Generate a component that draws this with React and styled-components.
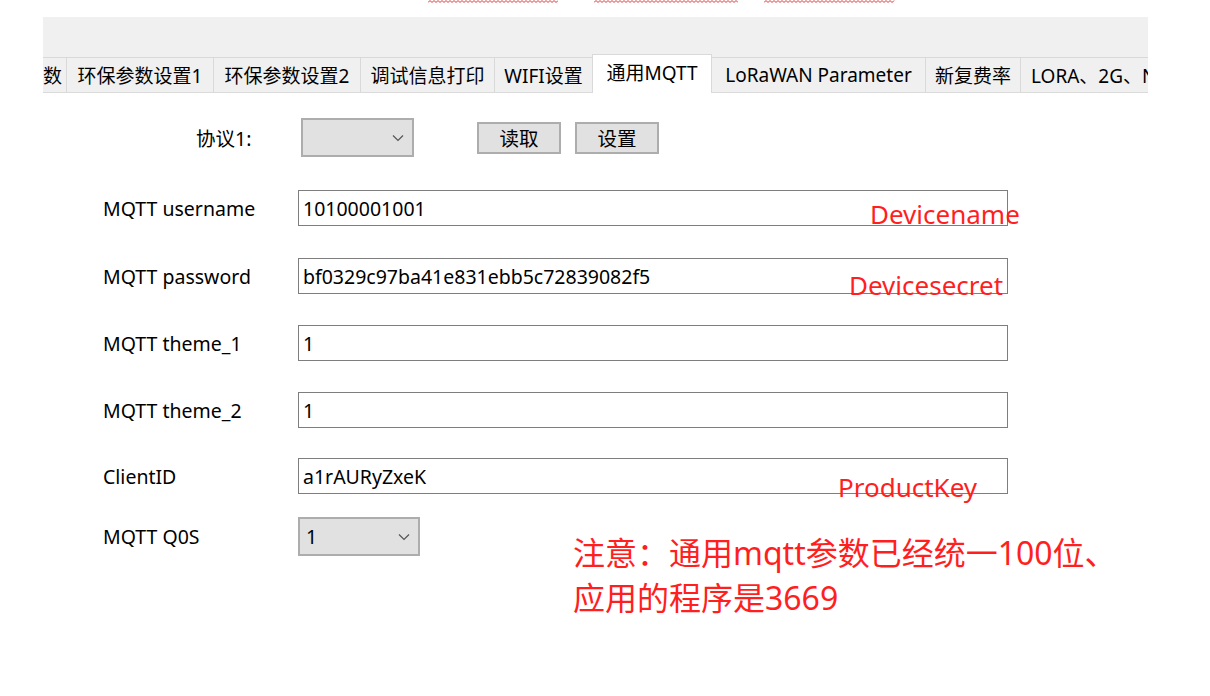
import React from "react";
import styled, { createGlobalStyle } from "styled-components";

const GlobalStyle = createGlobalStyle`
  html, body {
    margin: 0;
    padding: 0;
    background: #fff;
  }
  body {
    font-family: "Noto Sans", "Noto Sans CJK SC", sans-serif;
    color: #000;
  }
`;

const Page = styled.div`
  position: relative;
  width: 1210px;
  height: 696px;
  overflow: hidden;
  background: #fff;
`;

const SquiggleRow = styled.div`
  display: flex;
  height: 3px;
  padding-left: 428px;
`;

const Squiggle = styled.svg`
  display: block;
  margin-right: ${(p) => p.$gap || 0}px;
`;

const Panel = styled.div`
  margin: 14px 0 0 43px;
  width: 1105px;
  height: 76px;
  background: #f0f0f0;
  display: flex;
  flex-direction: column;
  justify-content: flex-end;
  overflow: hidden;
`;

const TabStrip = styled.div`
  display: flex;
  align-items: flex-end;
  height: 39px;
  box-shadow: inset 0 -1px 0 #dadada;
`;

const Tab = styled.div`
  flex: none;
  box-sizing: border-box;
  width: ${(p) => p.$w}px;
  height: ${(p) => (p.$active ? 39 : 36)}px;
  margin-left: -1px;
  padding: ${(p) => (p.$active ? "0 0 4px" : "0 0 1px")};
  padding-left: ${(p) => p.$pl || 0}px;
  display: flex;
  align-items: center;
  justify-content: ${(p) => (p.$pl !== undefined ? "flex-start" : "center")};
  background: ${(p) => (p.$active ? "#fff" : "#f0f0f0")};
  border: 1px solid #d9d9d9;
  border-bottom: ${(p) => (p.$active ? "none" : "1px solid #dadada")};
  font-size: 19px;
  white-space: nowrap;
  overflow: hidden;
  &:first-child {
    margin-left: 0;
    border-left: none;
  }
`;

const Form = styled.div`
  position: relative;
  padding-left: 103px;
`;

const Row = styled.div`
  display: flex;
  align-items: center;
  height: ${(p) => p.$h || 36}px;
  margin-top: ${(p) => p.$mt}px;
  padding-left: ${(p) => p.$indent || 0}px;
`;

const Label = styled.div`
  flex: none;
  width: ${(p) => p.$w || 195}px;
  font-size: 19.5px;
  white-space: nowrap;
`;

const TextBox = styled.div`
  box-sizing: border-box;
  width: 710px;
  height: 36px;
  border: 1px solid #7e7e7e;
  background: #fff;
  padding-left: 4px;
  display: flex;
  align-items: center;
  font-size: 19.5px;
`;

const Combo = styled.div`
  box-sizing: border-box;
  width: ${(p) => p.$w}px;
  height: 39px;
  background: #e1e1e1;
  border: 2px solid #adadad;
  padding: 0 8px 0 6px;
  display: flex;
  align-items: center;
  justify-content: space-between;
  font-size: 19.5px;
`;

const Button = styled.div`
  box-sizing: border-box;
  width: 84px;
  height: 32px;
  margin-left: ${(p) => p.$ml}px;
  background: #e1e1e1;
  border: 2px solid #adadad;
  display: flex;
  align-items: center;
  justify-content: center;
  font-size: 19.5px;
`;

const RedNote = styled.div`
  position: absolute;
  left: ${(p) => p.$x}px;
  top: ${(p) => p.$y}px;
  color: #ff1f1f;
  font-size: ${(p) => p.$size || 26}px;
  line-height: ${(p) => p.$lh || 1.2};
  white-space: nowrap;
`;

const Chevron = () => (
  <svg width="12" height="8" viewBox="0 0 12 8">
    <path d="M1 1.5 L6 6.5 L11 1.5" fill="none" stroke="#555" strokeWidth="1.2" />
  </svg>
);

const Wave = ({ w, gap }) => (
  <Squiggle $gap={gap} width={w} height="3" viewBox={`0 0 ${w} 3`}>
    <polyline
      fill="none"
      stroke="#e03030"
      strokeWidth="1"
      points={Array.from({ length: Math.floor(w / 2) + 1 }, (_, i) => `${i * 2},${i % 2 ? 0.5 : 2.5}`).join(" ")}
    />
  </Squiggle>
);

const tabs = [
  { t: "数", w: 24, pl: 0 },
  { t: "环保参数设置1", w: 148 },
  { t: "环保参数设置2", w: 148 },
  { t: "调试信息打印", w: 135 },
  { t: "WIFI设置", w: 99 },
  { t: "通用MQTT", w: 120, active: true },
  { t: "LoRaWAN Parameter", w: 215 },
  { t: "新复费率", w: 96 },
  { t: "LORA、2G、NB", w: 200, pl: 10 },
];

const fields = [
  { label: "MQTT username", value: "10100001001", mt: 33 },
  { label: "MQTT password", value: "bf0329c97ba41e831ebb5c72839082f5", mt: 32 },
  { label: "MQTT theme_1", value: "1", mt: 31 },
  { label: "MQTT theme_2", value: "1", mt: 31 },
  { label: "ClientID", value: "a1rAURyZxeK", mt: 30 },
];

export default function App() {
  return (
    <Page>
      <GlobalStyle />
      <SquiggleRow>
        <Wave w={130} gap={36} />
        <Wave w={144} gap={26} />
        <Wave w={131} />
      </SquiggleRow>

      <Panel>
        <TabStrip>
          {tabs.map((tab) => (
            <Tab key={tab.t} $w={tab.w} $active={tab.active} $pl={tab.pl}>
              {tab.t}
            </Tab>
          ))}
        </TabStrip>
      </Panel>

      <Form>
        <Row $h={39} $mt={25} $indent={93}>
          <Label $w={105}>协议1:</Label>
          <Combo $w={113}>
            <span />
            <Chevron />
          </Combo>
          <Button $ml={63}>读取</Button>
          <Button $ml={14}>设置</Button>
        </Row>

        {fields.map((f) => (
          <Row key={f.label} $mt={f.mt}>
            <Label>{f.label}</Label>
            <TextBox>{f.value}</TextBox>
          </Row>
        ))}

        <Row $h={39} $mt={23}>
          <Label>MQTT Q0S</Label>
          <Combo $w={122}>
            <span>1</span>
            <Chevron />
          </Combo>
        </Row>
      </Form>

      <RedNote $x={870} $y={199}>Devicename</RedNote>
      <RedNote $x={849} $y={270}>Devicesecret</RedNote>
      <RedNote $x={838} $y={472}>ProductKey</RedNote>
      <RedNote $x={573} $y={531} $size={32} $lh={1.4}>
        注意：通用mqtt参数已经统一100位、
        <br />
        应用的程序是3669
      </RedNote>
    </Page>
  );
}
